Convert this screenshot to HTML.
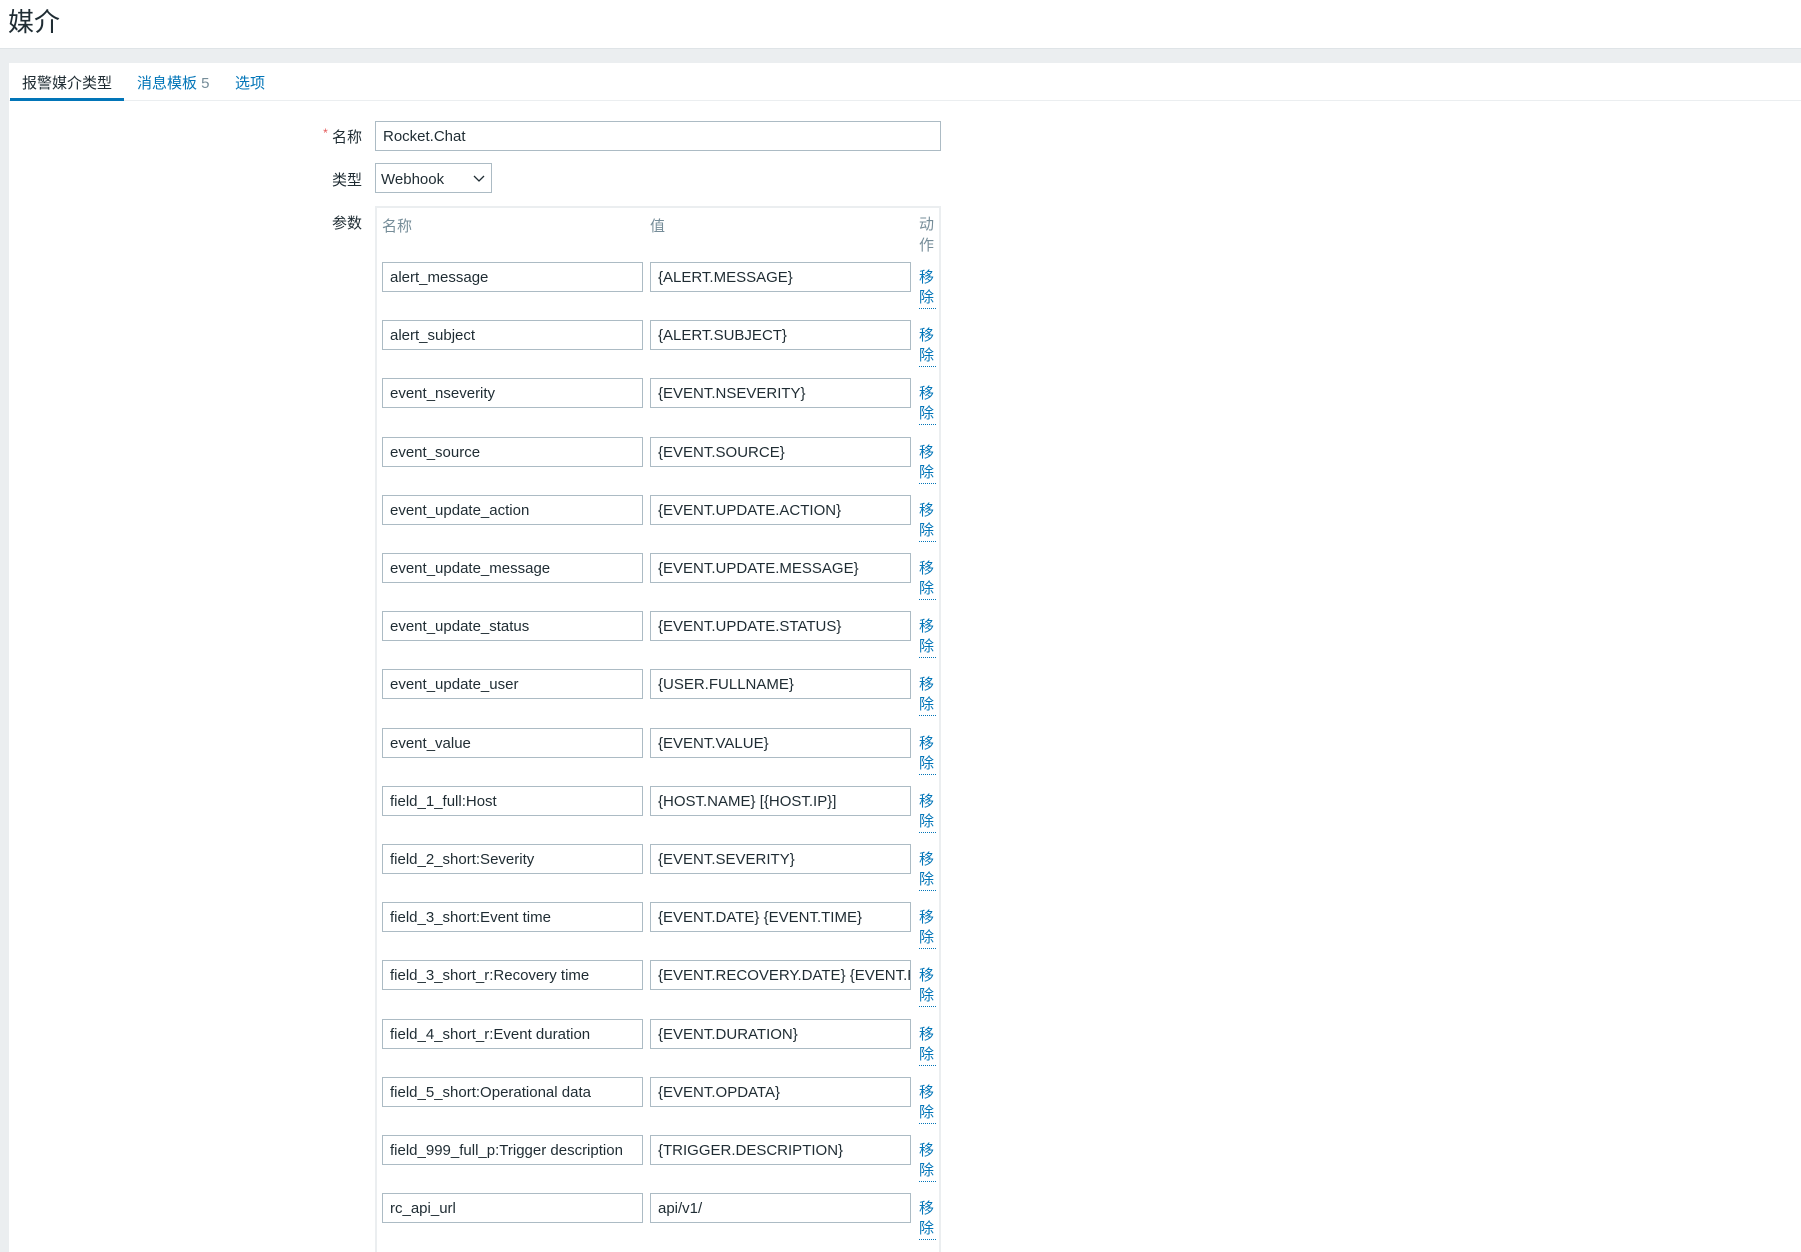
<!DOCTYPE html>
<html><head><meta charset="utf-8"><style>
*{box-sizing:border-box;margin:0;padding:0}
html,body{width:1801px;height:1252px;overflow:hidden}
body{background:#ebeef0;font-family:"Liberation Sans","Noto Sans CJK SC",sans-serif;color:#1f2c33;position:relative;font-size:15px}
.a{position:absolute;white-space:nowrap}
.top{position:absolute;left:0;top:0;width:1801px;height:49px;background:#fff;border-bottom:1px solid #dfe4e7}
.panel{position:absolute;left:9px;top:63px;width:1792px;height:1189px;background:#fff}
.inp{position:absolute;height:30px;border:1px solid #acbbc4;background:#fff;padding-left:7px;line-height:30px;font-size:15px;overflow:hidden;white-space:nowrap}
.lbl{position:absolute;text-align:right;width:100px;font-size:15px}
.rm{position:absolute;color:#0275b8;font-size:15px;line-height:20px;width:18px}
.rm span{display:block;border-bottom:1px dotted #0275b8;width:17px}
</style></head><body>
<div class="top"><div class="a" style="left:8px;top:5px;font-size:26px;line-height:34px">媒介</div></div>
<div class="panel"></div>
<div class="a" style="left:9px;top:100px;width:1792px;height:1px;background:#ebeef0"></div>
<div class="a" style="left:10px;top:98px;width:114px;height:3px;background:#0275b8"></div>
<div class="a" style="left:22px;top:72px;font-size:15px">报警媒介类型</div>
<div class="a" style="left:137px;top:72px;font-size:15px;color:#0275b8">消息模板 <span style="color:#768d99">5</span></div>
<div class="a" style="left:235px;top:72px;font-size:15px;color:#0275b8">选项</div>

<div class="lbl" style="left:262px;top:126px"><span style="color:#e45959;font-size:12px;vertical-align:top">*</span> 名称</div>
<div class="inp" style="left:375px;top:121px;width:566px">Rocket.Chat</div>
<div class="lbl" style="left:262px;top:169px">类型</div>
<div class="inp" style="left:375px;top:163px;width:117px;padding-left:5px;line-height:31px">Webhook
<svg style="position:absolute;right:6px;top:11px" width="12" height="8" viewBox="0 0 12 8"><path d="M1 1l5 5 5-5" fill="none" stroke="#1f2c33" stroke-width="1.3"/></svg></div>
<div class="lbl" style="left:262px;top:212px">参数</div>
<div class="a" style="left:375px;top:206px;width:566px;height:1046px;border:2px solid #ebeef0;border-bottom:none"></div>
<div class="a" style="left:382px;top:215px;color:#768d99">名称</div>
<div class="a" style="left:650px;top:215px;color:#768d99">值</div>
<div class="a" style="left:919px;top:214px;color:#768d99;line-height:21px">动<br>作</div>
<div id="rows"></div>
<script>
var r=[["alert_message","{ALERT.MESSAGE}"],["alert_subject","{ALERT.SUBJECT}"],["event_nseverity","{EVENT.NSEVERITY}"],["event_source","{EVENT.SOURCE}"],["event_update_action","{EVENT.UPDATE.ACTION}"],["event_update_message","{EVENT.UPDATE.MESSAGE}"],["event_update_status","{EVENT.UPDATE.STATUS}"],["event_update_user","{USER.FULLNAME}"],["event_value","{EVENT.VALUE}"],["field_1_full:Host","{HOST.NAME} [{HOST.IP}]"],["field_2_short:Severity","{EVENT.SEVERITY}"],["field_3_short:Event time","{EVENT.DATE} {EVENT.TIME}"],["field_3_short_r:Recovery time","{EVENT.RECOVERY.DATE} {EVENT.RECOVERY.TIME}"],["field_4_short_r:Event duration","{EVENT.DURATION}"],["field_5_short:Operational data","{EVENT.OPDATA}"],["field_999_full_p:Trigger description","{TRIGGER.DESCRIPTION}"],["rc_api_url","api/v1/"]];
var h="";r.forEach(function(x,i){var y=Math.round(262+i*58.2);
h+='<div class="inp" style="left:382px;top:'+y+'px;width:261px">'+x[0]+'</div>';
h+='<div class="inp" style="left:650px;top:'+y+'px;width:261px">'+x[1]+'</div>';
h+='<div class="rm" style="left:919px;top:'+(y+6)+'px">移<span>除</span></div>';});
document.getElementById("rows").innerHTML=h;
</script>
</body></html>
